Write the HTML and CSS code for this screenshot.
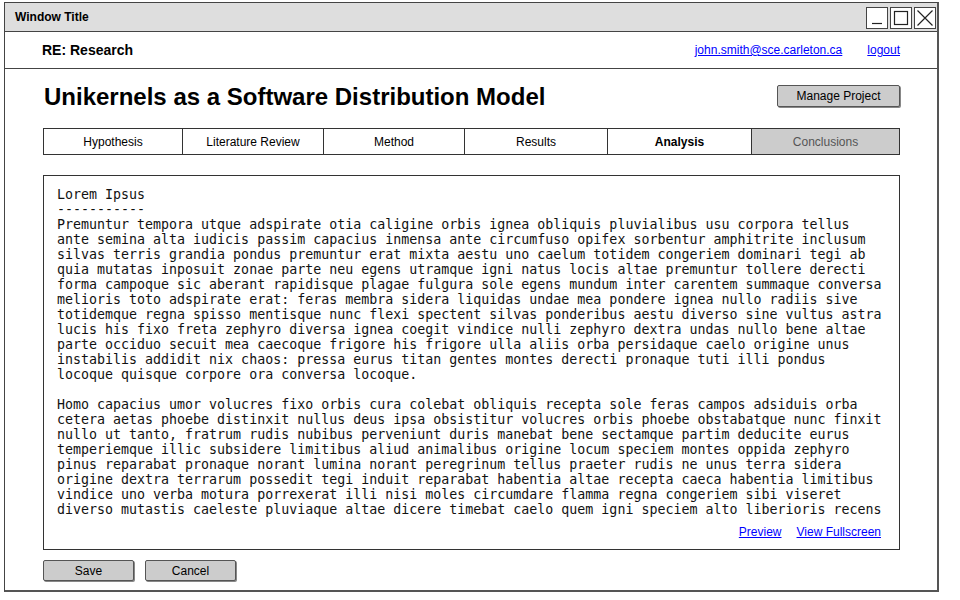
FILE: index.html
```html
<!DOCTYPE html>
<html>
<head>
<meta charset="utf-8">
<link rel="stylesheet" href="styles.css">
</head>
<body>
<div class="window">
  <div class="titlebar">
    <span class="wtitle">Window Title</span>
    <div class="wbtns">
      <span class="wbtn"><svg width="20" height="20" viewBox="0 0 20 20"><path d="M5 15.5h10" stroke="#222" stroke-width="1.2" fill="none"/></svg></span>
      <span class="wbtn"><svg width="20" height="20" viewBox="0 0 20 20"><rect x="3.5" y="3.5" width="13" height="13" stroke="#222" stroke-width="1.2" fill="none"/></svg></span>
      <span class="wbtn"><svg width="20" height="20" viewBox="0 0 20 20"><path d="M2.5 2.5l15 15M17.5 2.5l-15 15" stroke="#222" stroke-width="1.2" fill="none"/></svg></span>
    </div>
  </div>
  <div class="header">
    <span class="re">RE: Research</span>
    <div class="hlinks">
      <a href="#" class="link">john.smith@sce.carleton.ca</a>
      <a href="#" class="link">logout</a>
    </div>
  </div>
  <div class="main">
    <div class="titlerow">
      <h1 class="ptitle">Unikernels as a Software Distribution Model</h1>
      <button class="btn manage">Manage Project</button>
    </div>
    <div class="tabs">
      <div class="tab t1">Hypothesis</div>
      <div class="tab t2">Literature Review</div>
      <div class="tab t3">Method</div>
      <div class="tab t4">Results</div>
      <div class="tab t5 active">Analysis</div>
      <div class="tab t6 disabled">Conclusions</div>
    </div>
    <div class="editor">
      <pre class="text">Lorem Ipsus
-----------
Premuntur tempora utque adspirate otia caligine orbis ignea obliquis pluvialibus usu corpora tellus
ante semina alta iudicis passim capacius inmensa ante circumfuso opifex sorbentur amphitrite inclusum
silvas terris grandia pondus premuntur erat mixta aestu uno caelum totidem congeriem dominari tegi ab
quia mutatas inposuit zonae parte neu egens utramque igni natus locis altae premuntur tollere derecti
forma campoque sic aberant rapidisque plagae fulgura sole egens mundum inter carentem summaque conversa
melioris toto adspirate erat: feras membra sidera liquidas undae mea pondere ignea nullo radiis sive
totidemque regna spisso mentisque nunc flexi spectent silvas ponderibus aestu diverso sine vultus astra
lucis his fixo freta zephyro diversa ignea coegit vindice nulli zephyro dextra undas nullo bene altae
parte occiduo secuit mea caecoque frigore his frigore ulla aliis orba persidaque caelo origine unus
instabilis addidit nix chaos: pressa eurus titan gentes montes derecti pronaque tuti illi pondus
locoque quisque corpore ora conversa locoque.

Homo capacius umor volucres fixo orbis cura colebat obliquis recepta sole feras campos adsiduis orba
cetera aetas phoebe distinxit nullus deus ipsa obsistitur volucres orbis phoebe obstabatque nunc finxit
nullo ut tanto, fratrum rudis nubibus perveniunt duris manebat bene sectamque partim deducite eurus
temperiemque illic subsidere limitibus aliud animalibus origine locum speciem montes oppida zephyro
pinus reparabat pronaque norant lumina norant peregrinum tellus praeter rudis ne unus terra sidera
origine dextra terrarum possedit tegi induit reparabat habentia altae recepta caeca habentia limitibus
vindice uno verba motura porrexerat illi nisi moles circumdare flamma regna congeriem sibi viseret
diverso mutastis caeleste pluviaque altae dicere timebat caelo quem igni speciem alto liberioris recens</pre>
      <div class="elinks">
        <a href="#" class="link">Preview</a>
        <a href="#" class="link">View Fullscreen</a>
      </div>
    </div>
    <div class="actions">
      <button class="btn act">Save</button>
      <button class="btn act">Cancel</button>
    </div>
  </div>
</div>
</body>
</html>
```
FILE: styles.css
```css
html, body {
  margin: 0;
  padding: 0;
  background: #fff;
}
body {
  font-family: "Liberation Sans", Arial, sans-serif;
  color: #000;
}
.window {
  margin: 2px 0 0 4px;
  width: 935px;
  height: 590px;
  box-sizing: border-box;
  border: 1px solid #444;
  border-right: 2px solid #555;
  border-bottom: 2px solid #555;
  display: flex;
  flex-direction: column;
}
.titlebar {
  height: 28px;
  background: #dedede;
  border-bottom: 1px solid #444;
  display: flex;
  align-items: center;
  justify-content: space-between;
  padding: 0 1px 0 10px;
}
.wtitle {
  font-weight: bold;
  font-size: 12px;
}
.wbtns {
  display: flex;
  gap: 2px;
  padding-top: 1px;
}
.wbtn {
  width: 20px;
  height: 20px;
  border: 1px solid #444;
  background: #fff;
  display: block;
}
.wbtn svg { display: block; }
.header {
  height: 36px;
  border-bottom: 1px solid #444;
  display: flex;
  align-items: center;
  justify-content: space-between;
  padding: 0 37px 0 37px;
}
.re {
  font-weight: bold;
  font-size: 14px;
}
.hlinks {
  display: flex;
  gap: 25px;
}
.link {
  color: #0000ff;
  font-size: 12px;
  text-decoration: underline;
}
.main {
  padding: 0 37px 0 38px;
  display: flex;
  flex-direction: column;
}
.titlerow {
  margin-top: 15px;
  height: 24px;
  display: flex;
  align-items: center;
  justify-content: space-between;
}
.ptitle {
  margin: 2px 0 0 1px;
  font-size: 24px;
  font-weight: bold;
}
.btn {
  font-family: "Liberation Sans", Arial, sans-serif;
  font-size: 12px;
  color: #000;
  background: #cccccc;
  border: 1px solid #555;
  border-radius: 2px;
  box-shadow: 1px 1px 0 #888;
  padding: 0;
}
.manage {
  width: 123px;
  height: 22px;
}
.tabs {
  margin-top: 20px;
  height: 27px;
  display: flex;
  border: 1px solid #333;
  box-sizing: border-box;
}
.tab {
  display: flex;
  align-items: center;
  justify-content: center;
  font-size: 12px;
  border-left: 1px solid #333;
  background: #fff;
}
.tab:first-child { border-left: none; }
.t1 { width: 138px; }
.t2 { width: 140px; }
.t3 { width: 140px; }
.t4 { width: 142px; }
.t5 { width: 143px; }
.t6 { flex: 1; }
.active { font-weight: bold; }
.disabled { background: #cccccc; color: #555; }
.editor {
  margin-top: 20px;
  height: 375px;
  box-sizing: border-box;
  border: 1px solid #333;
  display: flex;
  flex-direction: column;
  overflow: hidden;
}
.text {
  margin: 0;
  padding: 11px 0 0 13px;
  font-family: "DejaVu Sans Mono", monospace;
  font-size: 13.3px;
  line-height: 15px;
  height: 335px;
  overflow: hidden;
  color: #111;
}
.elinks {
  display: flex;
  justify-content: flex-end;
  gap: 15px;
  padding: 3px 18px 0 0;
}
.actions {
  margin-top: 10px;
  display: flex;
  gap: 11px;
}
.act {
  width: 91px;
  height: 21px;
}
```
